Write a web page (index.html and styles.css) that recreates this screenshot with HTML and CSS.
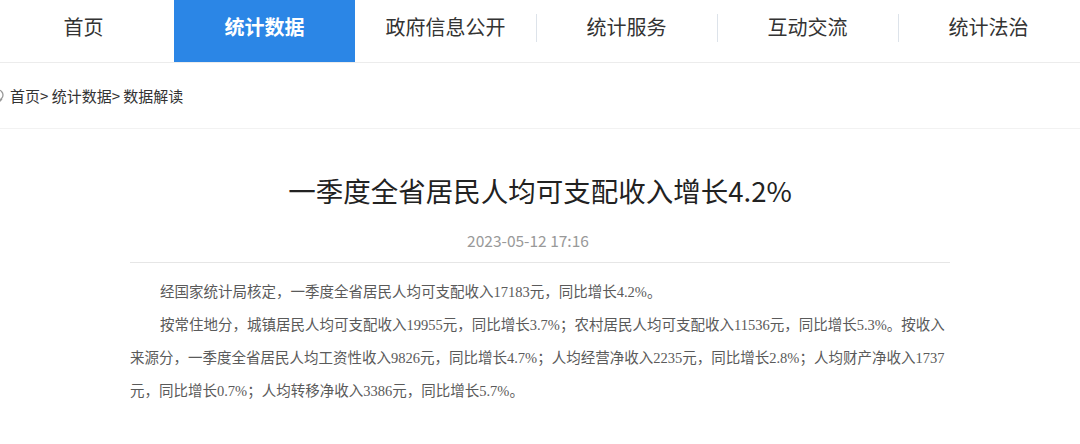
FILE: index.html
```html
<html>
<head>
<meta charset="utf-8">
<meta name="viewport" content="width=device-width, initial-scale=1.0" />
<link rel="stylesheet" href="styles.css">
</head>
<body>
<div class="nav">
  <div class="nav_list">
    <a class="nav_item">首页</a>
    <a class="nav_item active">统计数据</a>
    <a class="nav_item">政府信息公开</a>
    <a class="nav_item sep">统计服务</a>
    <a class="nav_item sep">互动交流</a>
    <a class="nav_item sep">统计法治</a>
  </div>
</div>

<div class="crumb">
  <svg class="crumb_icon" width="16" height="16" viewBox="0 0 16 16">
    <circle cx="8" cy="7" r="5" fill="none" stroke="#999" stroke-width="1.3"/>
    <path d="M4 11 L8 15 L12 11" fill="none" stroke="#999" stroke-width="1.3"/>
  </svg>
  <span>首页&gt; 统计数据&gt; 数据解读</span>
</div>

<div class="article">
  <h1 class="title">一季度全省居民人均可支配收入增长4.2%</h1>
  <div class="date">2023-05-12 17:16</div>
  <div class="content">
    <p>经国家统计局核定，一季度全省居民人均可支配收入17183元，同比增长4.2%。</p>
    <p>按常住地分，城镇居民人均可支配收入19955元，同比增长3.7%；农村居民人均可支配收入11536元，同比增长5.3%。按收入<br>来源分，一季度全省居民人均工资性收入9826元，同比增长4.7%；人均经营净收入2235元，同比增长2.8%；人均财产净收入1737<br>元，同比增长0.7%；人均转移净收入3386元，同比增长5.7%。</p>
  </div>
</div>
</body>
</html>
```

FILE: styles.css
```css
body
{
	margin:0;
	background:#fff;
	font-family:"Noto Sans CJK SC", sans-serif;
	color:#333;
	overflow:hidden;
}
.nav
{
	height:62px;
	border-bottom:1px solid #ececec;
	overflow:hidden;
}
.nav_list
{
	display:flex;
	margin-left:-7px;
}
.nav_item
{
	position:relative;
	width:181px;
	height:62px;
	line-height:54px;
	text-align:center;
	font-size:20px;
	color:#333;
	text-decoration:none;
}
.nav_item.active
{
	background:#2b86e6;
	color:#fff;
	font-weight:bold;
}
.nav_item.sep::before
{
	content:"";
	position:absolute;
	left:0;
	top:14px;
	height:28px;
	width:1px;
	background:#dde3ea;
}
.crumb
{
	display:flex;
	align-items:center;
	height:65px;
	border-bottom:1px solid #f2f2f2;
	font-size:15px;
	color:#333;
}
.crumb_icon
{
	margin-left:-10px;
	margin-right:4px;
}
.article
{
	width:820px;
	margin:0 auto;
}
.title
{
	margin:41px 0 0 0;
	line-height:40px;
	text-align:center;
	font-size:27.5px;
	font-weight:normal;
	color:#222;
}
.date
{
	margin-top:20px;
	line-height:20px;
	padding:0 24px 12px 0;
	border-bottom:1px solid #e6e6e6;
	text-align:center;
	font-size:15.5px;
	color:#999;
}
.content
{
	margin-top:13px;
	width:840px;
	font-family:"Liberation Serif", "Noto Sans CJK SC", serif;
	font-size:14.5px;
	line-height:33px;
	color:#5a5a5a;
}
.content p
{
	margin:0;
	text-indent:30px;
	white-space:nowrap;
}
```
